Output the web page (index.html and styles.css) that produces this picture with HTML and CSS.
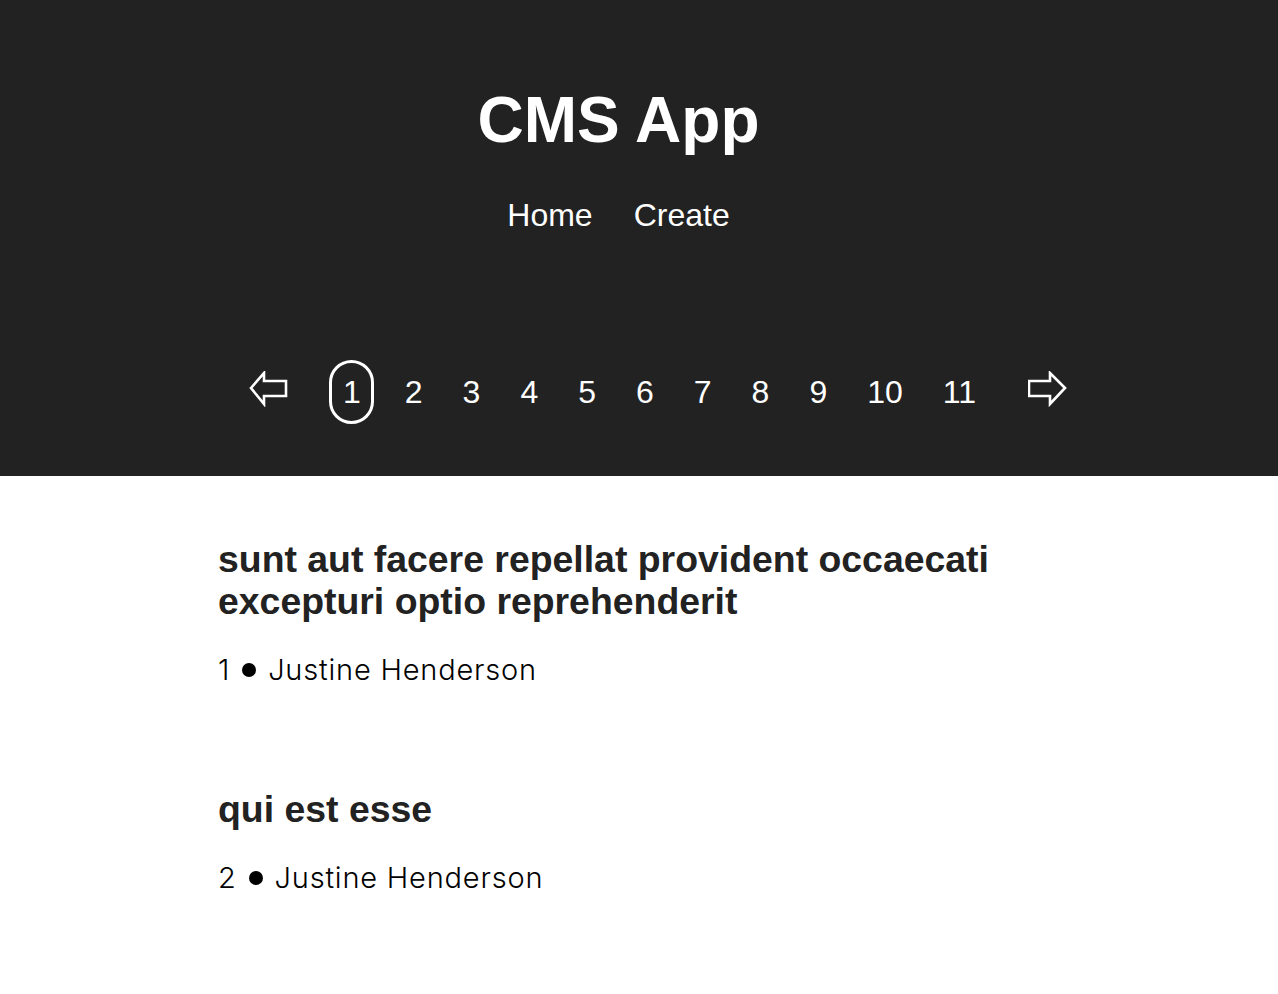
FILE: index.html
```html
<!DOCTYPE html>
<html lang="en">
<head>
<meta charset="utf-8">
<title>CMS App</title>
<link rel="stylesheet" href="styles.css">
</head>
<body>
<header class="site-header">
  <div class="brand">
    <h1 class="title">CMS App</h1>
    <nav class="nav">
      <a class="nav-link" href="#">Home</a>
      <a class="nav-link" href="#">Create</a>
    </nav>
  </div>
  <div class="pagination">
    <a class="arrow arrow-prev" href="#" aria-label="Previous">
      <svg width="40" height="36" viewBox="0 0 40 36"><polygon points="3,17 16,2 16,10 38,10 38,25 16,25 16,33" fill="none" stroke="#fff" stroke-width="2.6" stroke-linejoin="miter"/></svg>
    </a>
    <ul class="pages">
      <li class="page active">1</li>
      <li class="page">2</li>
      <li class="page">3</li>
      <li class="page">4</li>
      <li class="page">5</li>
      <li class="page">6</li>
      <li class="page">7</li>
      <li class="page">8</li>
      <li class="page">9</li>
      <li class="page">10</li>
      <li class="page">11</li>
    </ul>
    <a class="arrow arrow-next" href="#" aria-label="Next">
      <svg width="40" height="36" viewBox="0 0 40 36"><polygon points="37,17 22,2 22,10 1,10 1,25 22,25 22,33" fill="none" stroke="#fff" stroke-width="2.6" stroke-linejoin="miter"/></svg>
    </a>
  </div>
</header>
<main class="posts">
  <article class="post">
    <h2 class="post-title">sunt aut facere repellat provident occaecati excepturi optio reprehenderit</h2>
    <p class="post-meta">1 <span class="dot"></span> Justine Henderson</p>
  </article>
  <article class="post">
    <h2 class="post-title">qui est esse</h2>
    <p class="post-meta">2 <span class="dot"></span> Justine Henderson</p>
  </article>
</main>
</body>
</html>
```

FILE: styles.css
```css
* { box-sizing: border-box; }

body {
  margin: 0;
  background: #fff;
  font-family: "Liberation Sans", Arial, sans-serif;
}

.site-header {
  background: #222222;
  color: #fff;
  height: 476px;
  padding-top: 83px;
}

.brand {
  display: flex;
  flex-direction: column;
  align-items: center;
  padding-right: 41px;
}

.title {
  margin: 0;
  font-size: 64px;
  line-height: 74px;
  font-weight: 700;
}

.nav {
  display: flex;
  gap: 41px;
  margin-top: 40px;
}

.nav-link {
  color: #fff;
  text-decoration: none;
  font-size: 32px;
  line-height: 37px;
}

.pagination {
  display: flex;
  align-items: center;
  justify-content: center;
  padding-left: 38px;
  margin-top: 126px;
}

.arrow {
  display: flex;
  width: 40px;
  height: 36px;
  margin-top: -6px;
}

.pages {
  display: flex;
  align-items: center;
  gap: 14px;
  list-style: none;
  margin: 0 39px 0 41px;
  padding: 0;
}

.page {
  font-size: 32px;
  line-height: 38px;
  padding: 10px 10px;
  border: 3px solid transparent;
  border-radius: 24px;
  color: #fff;
}

.page.active {
  border-color: #fff;
  padding: 10px 10px 10px 11px;
  margin-right: 4px;
}

.posts {
  width: 842px;
  margin: 0 auto;
  padding-top: 62px;
}

.post {
  margin-bottom: 101px;
}

.post-title {
  margin: 0;
  font-size: 37.4px;
  line-height: 42px;
  font-weight: 700;
  color: #222;
  width: 800px;
}

.post-meta {
  margin: 31px 0 0;
  font-family: "Inter", "Liberation Sans", sans-serif;
  font-weight: 300;
  font-size: 29px;
  line-height: 34px;
  color: #000;
  letter-spacing: 0.8px;
}

.dot {
  display: inline-block;
  width: 14px;
  height: 14px;
  border-radius: 50%;
  background: #000;
  margin: 0 3px;
  vertical-align: 3px;
}
```
